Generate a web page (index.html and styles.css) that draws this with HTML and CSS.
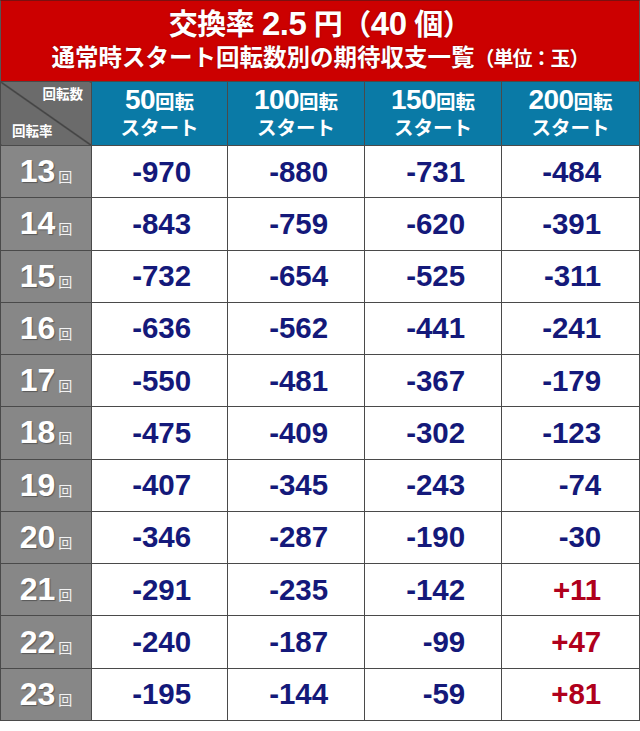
FILE: index.html
```html
<!DOCTYPE html>
<html lang="ja">
<head>
<meta charset="utf-8">
<link rel="stylesheet" href="styles.css">
</head>
<body>
<div class="sheet">
  <div class="banner">
    <div class="title">交換率 <span class="num">2.5</span> 円（<span class="num">40</span> 個）</div>
    <div class="subtitle">通常時スタート回転数別の期待収支一覧<span class="unit">（単位：玉）</span></div>
  </div>
  <table class="grid">
    <colgroup>
      <col class="c0"><col class="c1"><col class="c2"><col class="c3"><col class="c4">
    </colgroup>
    <thead>
      <tr>
        <th class="corner"><span class="cn-top">回転数</span><span class="cn-bot">回転率</span></th>
        <th class="hd"><div><span class="big">50</span>回転</div><div>スタート</div></th>
        <th class="hd"><div><span class="big">100</span>回転</div><div>スタート</div></th>
        <th class="hd"><div><span class="big">150</span>回転</div><div>スタート</div></th>
        <th class="hd"><div><span class="big">200</span>回転</div><div>スタート</div></th>
      </tr>
    </thead>
    <tbody>
      <tr><th class="rl"><span class="n">13</span><span class="k">回</span></th><td>-970</td><td>-880</td><td>-731</td><td>-484</td></tr>
      <tr><th class="rl"><span class="n">14</span><span class="k">回</span></th><td>-843</td><td>-759</td><td>-620</td><td>-391</td></tr>
      <tr><th class="rl"><span class="n">15</span><span class="k">回</span></th><td>-732</td><td>-654</td><td>-525</td><td>-311</td></tr>
      <tr><th class="rl"><span class="n">16</span><span class="k">回</span></th><td>-636</td><td>-562</td><td>-441</td><td>-241</td></tr>
      <tr><th class="rl"><span class="n">17</span><span class="k">回</span></th><td>-550</td><td>-481</td><td>-367</td><td>-179</td></tr>
      <tr><th class="rl"><span class="n">18</span><span class="k">回</span></th><td>-475</td><td>-409</td><td>-302</td><td>-123</td></tr>
      <tr><th class="rl"><span class="n">19</span><span class="k">回</span></th><td>-407</td><td>-345</td><td>-243</td><td>-74</td></tr>
      <tr><th class="rl"><span class="n">20</span><span class="k">回</span></th><td>-346</td><td>-287</td><td>-190</td><td>-30</td></tr>
      <tr><th class="rl"><span class="n">21</span><span class="k">回</span></th><td>-291</td><td>-235</td><td>-142</td><td class="pos">+11</td></tr>
      <tr><th class="rl"><span class="n">22</span><span class="k">回</span></th><td>-240</td><td>-187</td><td>-99</td><td class="pos">+47</td></tr>
      <tr><th class="rl"><span class="n">23</span><span class="k">回</span></th><td>-195</td><td>-144</td><td>-59</td><td class="pos">+81</td></tr>
    </tbody>
  </table>
</div>
</body>
</html>
```

FILE: styles.css
```css
html, body {
  margin: 0;
  padding: 0;
  background: #ffffff;
}

.sheet {
  width: 640px;
  font-family: "Liberation Sans", "Noto Sans CJK JP", sans-serif;
}

.banner {
  background: #cc0000;
  border-top: 1px solid #7a1010;
  border-left: 1px solid #555;
  border-right: 1px solid #555;
  box-sizing: border-box;
  height: 81px;
  color: #fff;
  text-align: center;
  font-weight: bold;
  display: flex;
  flex-direction: column;
  align-items: center;
  padding-top: 5px;
  text-shadow: 0 0 2px rgba(90, 0, 0, 0.6);
}

.title {
  font-size: 29px;
  line-height: 36px;
  letter-spacing: -0.5px;
}

.title .num {
  font-size: 33px;
}

.subtitle {
  font-size: 23.5px;
  line-height: 30px;
  letter-spacing: 0;
}

.unit {
  font-size: 20px;
  letter-spacing: -1px;
}

.grid {
  width: 639px;
  border-collapse: collapse;
  table-layout: fixed;
}

.c0 { width: 91px; }
.c1 { width: 136px; }
.c2 { width: 137px; }
.c3 { width: 137px; }
.c4 { width: 138px; }

.grid th, .grid td {
  border: 1px solid #4a4a4a;
  padding: 0;
}

.corner {
  position: relative;
  height: 63px;
  background-color: #6b6b6b;
  background-image: linear-gradient(to top right, transparent calc(50% - 0.8px), #1a1a1a 50%, transparent calc(50% + 0.8px));
  color: #fff;
  font-size: 13.5px;
  font-weight: bold;
}

.cn-top {
  position: absolute;
  top: 5px;
  right: 8px;
  line-height: 16px;
}

.cn-bot {
  position: absolute;
  bottom: 5px;
  left: 11px;
  line-height: 16px;
}

.hd {
  background: #0a7aa6;
  color: #fff;
  font-weight: bold;
  font-size: 19.5px;
  line-height: 26px;
  text-align: center;
  vertical-align: middle;
  padding-top: 9px;
}

.hd .big {
  font-size: 28px;
  letter-spacing: -0.5px;
}

.grid tbody tr {
  height: 52.27px;
}

.rl {
  background: #878787;
  color: #fff;
  text-align: center;
  vertical-align: middle;
  font-weight: bold;
  white-space: nowrap;
}

.rl .n {
  font-size: 32px;
  letter-spacing: 0;
  text-shadow: 1px 1px 1px rgba(0, 0, 0, 0.35);
}

.rl .k {
  font-size: 14px;
  font-weight: normal;
  margin-left: 3px;
  color: #f2f2f2;
}

.grid td {
  text-align: right;
  vertical-align: middle;
  padding-right: 36px;
  font-size: 29.5px;
  font-weight: bold;
  color: #14197a;
  letter-spacing: -0.1px;
}

.grid td:last-child {
  padding-right: 38px;
}

.grid td.pos {
  color: #b0001c;
}
```
